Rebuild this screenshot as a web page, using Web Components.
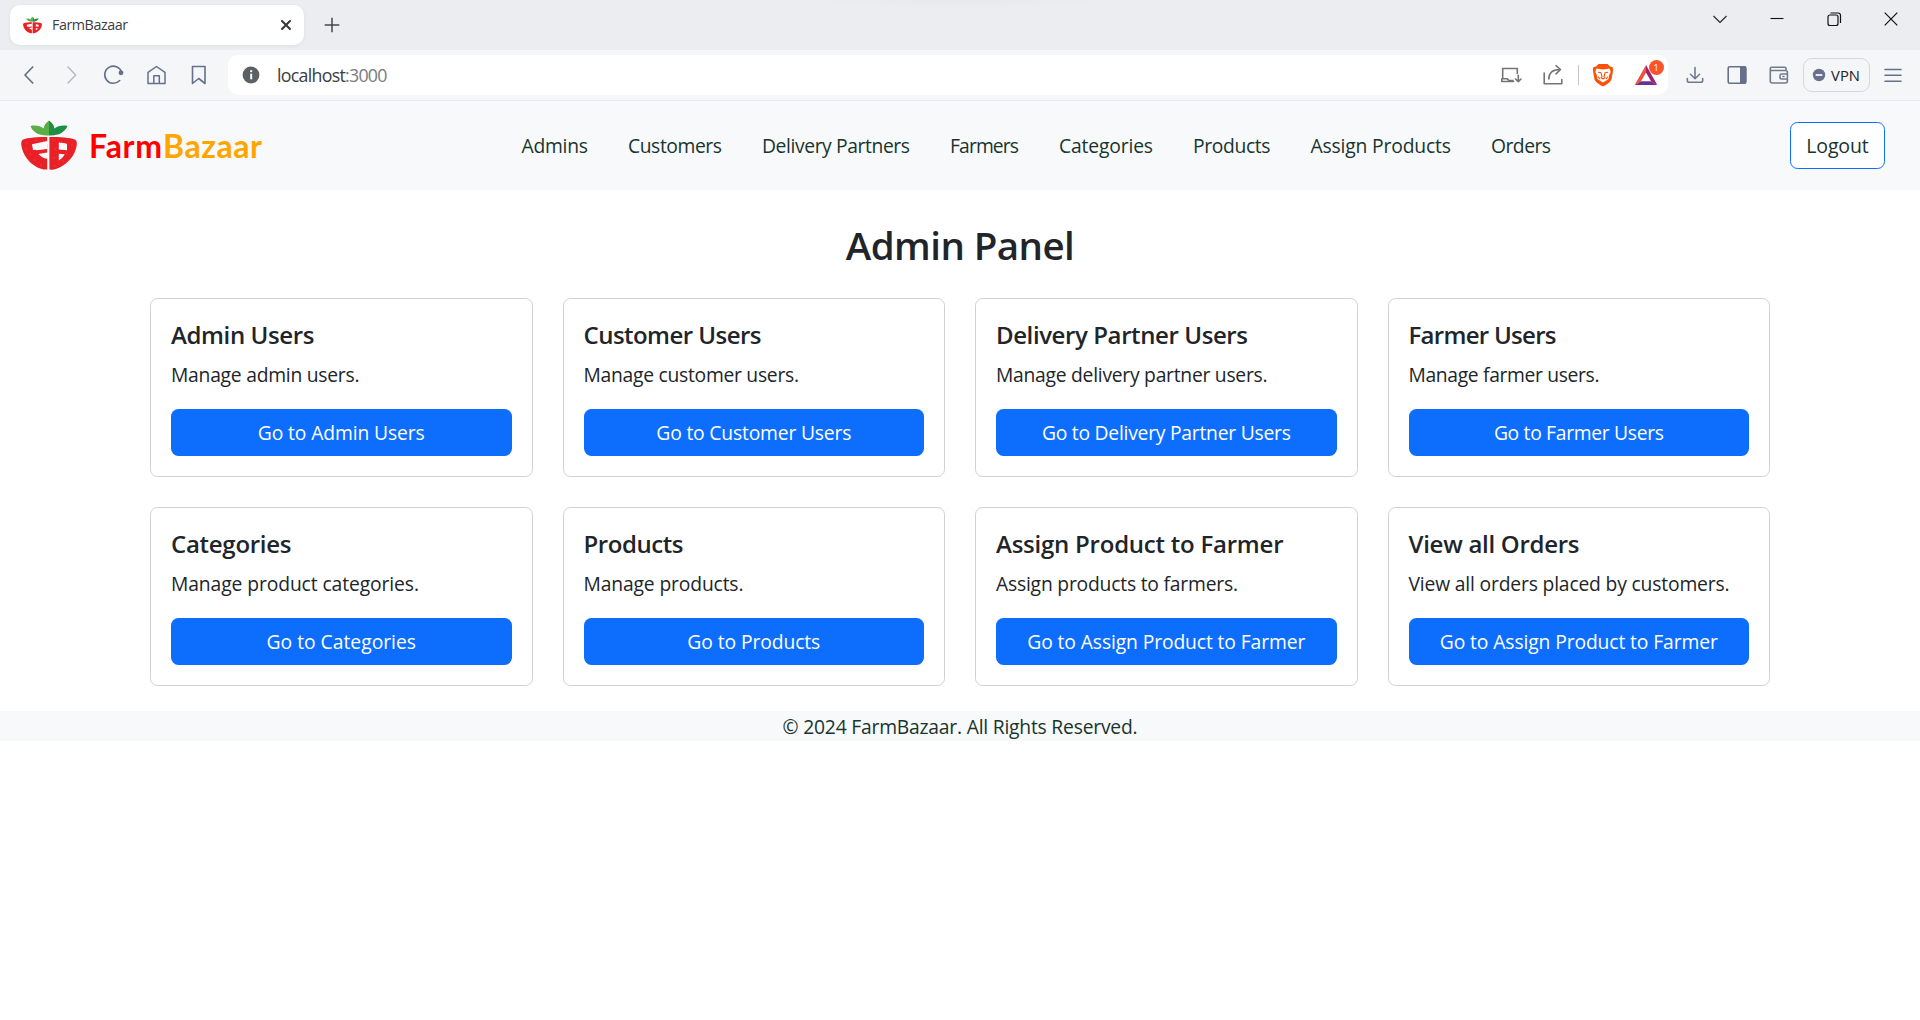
<!DOCTYPE html>
<html lang="en">
<head>
<meta charset="utf-8">
<title>FarmBazaar</title>
<style>
body{margin:0;background:#fff;color:#212529;font-family:"Open Sans","Noto Sans",sans-serif;font-size:19.300px}
</style>
</head>
<body>
<browser-chrome></browser-chrome>
<farm-navbar></farm-navbar>
<admin-panel>
  <panel-card heading="Admin Users" hw="143.500" text="Manage admin users." tw="188.500" action="Go to Admin Users" aw="167"></panel-card>
  <panel-card heading="Customer Users" hw="178" text="Manage customer users." tw="215.500" action="Go to Customer Users" aw="195"></panel-card>
  <panel-card heading="Delivery Partner Users" hw="252" text="Manage delivery partner users." tw="271.500" action="Go to Delivery Partner Users" aw="249"></panel-card>
  <panel-card heading="Farmer Users" hw="148" text="Manage farmer users." tw="191" action="Go to Farmer Users" aw="170"></panel-card>
  <panel-card heading="Categories" hw="120.500" text="Manage product categories." tw="248" action="Go to Categories" aw="149.500"></panel-card>
  <panel-card heading="Products" hw="100" text="Manage products." tw="160" action="Go to Products" aw="133"></panel-card>
  <panel-card heading="Assign Product to Farmer" hw="287.500" text="Assign products to farmers." tw="242" action="Go to Assign Product to Farmer" aw="278"></panel-card>
  <panel-card heading="View all Orders" hw="171" text="View all orders placed by customers." tw="321" action="Go to Assign Product to Farmer" aw="278"></panel-card>
</admin-panel>
<farm-footer></farm-footer>
<script>
const define = (name, markup, after) => customElements.define(name, class extends HTMLElement {
  connectedCallback() {
    if (this.shadowRoot) return;
    const t = document.createElement('template');
    t.innerHTML = typeof markup === 'function' ? markup(this) : markup;
    this.attachShadow({mode: 'open'}).append(t.content.cloneNode(true));
    if (after) after(this);
  }
});

/* A single line of text tracked so that it fills the width given in "w". */
define('fit-text', '<style>:host{display:inline-block;white-space:nowrap}span{display:inline-block}</style><span><slot></slot></span>', el => {
  const w = parseFloat(el.getAttribute('w'));
  const span = el.shadowRoot.querySelector('span');
  const n = el.textContent.length;
  const gap = (w - span.getBoundingClientRect().width) / (n - 1);
  el.style.width = w + 'px';
  span.style.letterSpacing = gap.toFixed(3) + 'px';
});

define('berry-logo', `<style>:host{display:block;flex:none}svg{display:block;width:100%;height:100%}</style>
<svg viewBox="0 0 56 50">
<path fill="#5aae45" d="M28 .5C24.500 3 23 5.500 22.800 8.500C19.500 6 14.500 5 9.500 6C11.500 11.500 17 16 28 15.500Z"/>
<path fill="#1f8f45" d="M28 .5C31.500 3 33.200 5.500 33.400 8.500C36.500 6 41.500 5 46.500 6C44 11.500 38.500 16 28 15.500Z"/>
<path fill="#ea2027" fill-rule="evenodd" d="M26.200 17C18 17 6 17.600 2 19.600C-.5 21 0 26 1.500 30C3.500 37 10.500 46 20 48.700C22.500 49.500 24.500 49.800 26.200 49.500V38.800C22.500 38 20 36.500 17.300 33.900L26.200 32.600V28.800L12 30L11 24.300L26.200 21Z"/>
<path fill="#ea2027" d="M15.500 26.200L26.200 24.400V27.300L15.500 28.400Z"/>
<path fill="#ea2027" fill-rule="evenodd" d="M28.400 17C38 17 50 17.600 54 19.600C56.700 21 56 26 54.500 30C52 38 44 46 35.500 48.700C32.500 49.600 30.300 49.800 28.400 49.500ZM37.800 22.500V29.500L46 30.300V24C43.500 23 41 22.600 37.800 22.500ZM37.800 33.800V40.500C41 38.500 42.500 37 43.700 34.300Z"/>
<path fill="#f8f9fb" d="M15 24.800L26.300 22.500V29L15 30.200Z"/>
<g fill="#f26a68"><circle cx="6" cy="23" r=".5"/><circle cx="5" cy="29" r=".5"/><circle cx="9" cy="34" r=".5"/><circle cx="14" cy="40" r=".5"/><circle cx="20" cy="45" r=".5"/><circle cx="15" cy="20" r=".5"/><circle cx="33" cy="20" r=".5"/><circle cx="34" cy="29" r=".5"/><circle cx="33" cy="38" r=".5"/><circle cx="46" cy="34" r=".5"/><circle cx="51" cy="25" r=".5"/><circle cx="34" cy="46" r=".5"/><circle cx="42" cy="41" r=".5"/></g>
<path fill="#ea2027" d="M13 26.800L26.200 24.600V27.400L13 28.800Z" opacity="0"/>
</svg>`);

const S = 'fill="none" stroke-linecap="round" stroke-linejoin="round"';
const icons = {
  back: `<path ${S} stroke="#66708a" stroke-width="1.700" d="M18.700 7L11 15L18.700 23"/>`,
  forward: `<path ${S} stroke="#b6bac5" stroke-width="1.500" d="M11 7L18.700 15L11 23"/>`,
  reload: `<path ${S} stroke="#66708a" stroke-width="1.600" d="M22.500 12A8.600 8.600 0 1 0 20.700 20.500"/><circle cx="22" cy="12.800" r="2.400" fill="#66708a"/>`,
  home: `<path ${S} stroke="#66708a" stroke-width="1.500" d="M6 12.300L14.500 6.500L23 12.300V23.500H6ZM11.800 23.200V15.800H17.300V23.200"/>`,
  bookmark: `<path ${S} stroke="#66708a" stroke-width="1.600" d="M8.500 6.500H21V23.500L14.700 18.500L8.500 23.500Z"/>`,
  info: `<circle cx="15" cy="15" r="8.400" fill="#5b6065"/><path stroke="#fff" stroke-width="2" d="M15.200 13.700V19.300"/><circle cx="15.200" cy="11.200" r="1.150" fill="#fff"/>`,
  device: `<path ${S} stroke="#737579" stroke-width="1.600" d="M6.700 18V8.500H21.300V13.500M5.800 18.700H11L13 20.500H17M5.800 18.700V21.500H17.500M22.300 15.200V21.500M19.500 19L22.300 21.700L25 19"/>`,
  share: `<path ${S} stroke="#737579" stroke-width="1.600" d="M6.200 13V23.700H23.800V19.500M10.800 19C10.800 13.500 14 9.700 21.500 9.500M18 5.700L22.500 9.500L18 13.800"/>`,
  lion: `<path fill="#fb5109" d="M10.500 4H19.700L22 6.500L24.800 7.200L25 11L23.500 19.500C22.500 22 18 25 15 26.500C12 25 7.500 22 6.500 19.500L5 11L5.200 7.200L8 6.500Z"/><path fill="#fff" d="M8.500 8.500L11.500 9L15 9.500L18.500 9L21.500 8.500L22.700 12L21 15.500L20.500 19L17.500 21L15 22.500L12.500 21L9.500 19L9 15.500L7.300 12Z"/><path ${S} stroke="#fb5109" stroke-width="1.100" d="M10.300 12.200L13 12.800L14 17M19.700 12.200L17 12.800L16 17M13 17.800L15 18.900L17 17.800M10.500 17L11.700 18.700M19.500 17L18.300 18.700"/>`,
  bat: `<path fill="#f7503a" d="M15 5L3.700 25L10 21.200L15 12.500Z"/><path fill="#9e2268" d="M15 5L26.300 25L20 21.200L15 12.500Z"/><path fill="#6b3296" d="M3.700 25H26.300L20 21.200H10Z"/>`,
  download: `<path ${S} stroke="#717b90" stroke-width="1.600" d="M15 7.500V18.500M10.500 14.300L15 18.700L19.500 14.300M7.300 18.500V20.500Q7.300 22.300 9.300 22.300H20.700Q22.700 22.300 22.700 20.500V18.500"/>`,
  sidebar: `<rect x="6.200" y="6.700" width="17.700" height="16.500" rx="1.500" fill="none" stroke="#66708a" stroke-width="1.600"/><path fill="#66708a" d="M18 6.500H24V23.300H18Z"/>`,
  wallet: `<path ${S} stroke="#717b90" stroke-width="1.600" d="M22 10.500V8.300Q22 7.200 20.800 7.200H7.700Q6.300 7.200 6.300 8.600V21Q6.300 23 8.300 23H21.500Q23.400 23 23.400 21V12.300Q23.400 10.500 21.500 10.500H7.500M23.300 14H17.700Q16 14 16 15.500V17.300Q16 19 17.700 19H23.300M19 16.500H20"/>`,
  menu: `<path stroke="#66708a" stroke-width="1.600" stroke-linecap="round" d="M7 9.500H23M7 15.300H23M7 21.200H23"/>`,
  plus: `<path stroke="#44474b" stroke-width="1.500" d="M7.700 15H22.300M15 7.700V22.300"/>`,
  tabclose: `<path stroke="#33363a" stroke-width="2" stroke-linecap="round" d="M11 11L19 19M19 11L11 19"/>`,
  chevron: `<path fill="none" stroke="#202124" stroke-width="1.100" d="M8.500 12L15 18.500L21.500 12"/>`,
  min: `<path stroke="#111" stroke-width="1.100" d="M8.500 14.500H21.500"/>`,
  restore: `<rect x="9" y="11" width="10" height="10.500" rx="2" fill="none" stroke="#111" stroke-width="1.200"/><path fill="none" stroke="#111" stroke-width="1.200" d="M11.500 9H19Q21.500 9 21.500 11.500V19"/>`,
  close: `<path stroke="#111" stroke-width="1.200" d="M8.700 8.700L21.300 21.300M21.300 8.700L8.700 21.300"/>`,
  vpn: `<circle cx="15" cy="15" r="6.200" fill="#6b7090"/><path stroke="#fff" stroke-width="1.700" d="M11.700 15H18.300"/>`
};
define('ui-icon', el => `<style>:host{display:grid;place-items:center;flex:none}svg{display:block;width:30px;height:30px}</style><svg viewBox="0 0 30 30">${icons[el.getAttribute('name')]}</svg>`);

define('browser-chrome', `<style>
:host{display:block;color:#3c4043}
.tabs{height:50px;background:radial-gradient(ellipse 150px 9px at 50% 0,#e7e8ec,#e7e8ec00) 810px 0/300px 9px no-repeat,#ecedf1;display:flex;padding-left:10px;box-sizing:border-box}
.tab{box-sizing:border-box;width:294px;height:40px;margin-top:5px;background:#fff;border-radius:10px;display:flex;align-items:center;padding-left:13px;box-shadow:0 1px 4px #0000000f}
.tab berry-logo{width:19px;height:18px}
.tab fit-text{font-size:14.300px;line-height:20px;margin-left:10px}
.tab ui-icon{margin-left:auto;margin-right:3px}
.plus{margin:10px 0 0 12.500px;height:30px}
.win{margin-left:auto;display:flex;height:37px}
.win ui-icon{width:57.100px}
.bar{height:51px;box-sizing:border-box;border-bottom:1px solid #e9ebee;background:#f5f6f8;display:flex;align-items:center;padding-left:8px}
.nav{width:42.500px}
.url{box-sizing:border-box;width:1440px;height:40px;background:#fff;border-radius:10px;margin-left:7.500px;display:flex;align-items:center;padding-left:7.500px}
.url fit-text{font-size:17.800px;margin:-1px 0 0 11.500px;line-height:24px;color:#3a3d41}
.right{margin-left:auto;display:flex;align-items:center}
.right .cell{width:42px}
.line{width:1px;height:20px;background:#c4c6ca;margin:0 9px 0 4px}
.bat{position:relative;margin:0 7px 0 13px}
.badge{position:absolute;left:17.500px;top:0;width:15px;height:15px;border-radius:50%;background:#fb542b;color:#fff;font-size:9px;line-height:15px;text-align:center}
.vpn{box-sizing:border-box;width:67px;height:34px;border:1px solid #d5d8dd;border-radius:9px;display:flex;align-items:center;margin-left:3px}
.vpn ui-icon{width:30px}
.vpn fit-text{font-size:14.800px;color:#202124;margin-left:-3px;line-height:20px}
.icons{margin-left:6px;display:flex;align-items:center}
.icons .t{width:42px}
.menu{margin-left:7.500px}
</style>
<div class="tabs"><div class="tab"><berry-logo></berry-logo><fit-text w="76">FarmBazaar</fit-text><ui-icon name="tabclose"></ui-icon></div><ui-icon class="plus" name="plus"></ui-icon>
<div class="win"><ui-icon name="chevron"></ui-icon><ui-icon name="min"></ui-icon><ui-icon name="restore"></ui-icon><ui-icon name="close"></ui-icon></div></div>
<div class="bar"><ui-icon class="nav" name="back"></ui-icon><ui-icon class="nav" name="forward"></ui-icon><ui-icon class="nav" name="reload"></ui-icon><ui-icon class="nav" name="home"></ui-icon><ui-icon class="nav" name="bookmark"></ui-icon>
<div class="url"><ui-icon name="info"></ui-icon><fit-text w="110.500">localhost<span style="color:#777b80">:3000</span></fit-text>
<div class="right"><ui-icon class="cell" name="device"></ui-icon><ui-icon class="cell" name="share"></ui-icon><div class="line"></div><ui-icon name="lion"></ui-icon><div class="bat"><ui-icon name="bat"></ui-icon><div class="badge">1</div></div></div></div>
<div class="icons"><ui-icon class="t" name="download"></ui-icon><ui-icon class="t" name="sidebar"></ui-icon><ui-icon class="t" name="wallet"></ui-icon></div>
<div class="vpn"><ui-icon name="vpn"></ui-icon><fit-text w="29">VPN</fit-text></div><ui-icon class="menu" name="menu"></ui-icon></div>`);

define('farm-navbar', `<style>
:host{display:flex;align-items:center;box-sizing:border-box;height:89px;background:#f8f9fb;padding:0 35px 0 21px;color:#17352d;line-height:30px}
berry-logo{width:56px;height:50px;margin-top:-1px}
.brand{font:700 32px/40px Lato,sans-serif;margin:0 0 0 12px;display:flex;width:173px;justify-content:space-between}
.farm{color:red}.bazaar{color:orange}
nav{display:flex;gap:40px;margin-left:259.500px}
.logout{box-sizing:border-box;margin-left:auto;width:95px;height:47px;border:1px solid #0d6efd;border-radius:7.500px;background:#fff;display:grid;place-items:center;font-size:19.500px}
</style>
<berry-logo></berry-logo><div class="brand"><fit-text class="farm" w="73">Farm</fit-text><fit-text class="bazaar" w="99">Bazaar</fit-text></div>
<nav><fit-text w="66.500">Admins</fit-text><fit-text w="94">Customers</fit-text><fit-text w="148">Delivery Partners</fit-text><fit-text w="69">Farmers</fit-text><fit-text w="94">Categories</fit-text><fit-text w="77.500">Products</fit-text><fit-text w="140.500">Assign Products</fit-text><fit-text w="60">Orders</fit-text></nav>
<div class="logout"><fit-text w="62.500">Logout</fit-text></div>`);

define('admin-panel', `<style>
:host{display:block;width:1620px;margin:0 auto;padding-top:30px}
h1{font-size:38.500px;font-weight:600;line-height:60px;margin:-5px 0 0;text-align:center}
.grid{display:grid;grid-template-columns:repeat(4,1fr);gap:30px;padding-top:23px}
</style><h1><fit-text w="229">Admin Panel</fit-text></h1><div class="grid"><slot></slot></div>`);

define('panel-card', el => { const a = n => el.getAttribute(n); return `<style>
:host{display:block;box-sizing:border-box;height:179px;border:1px solid #d0d1d2;border-radius:7.500px;padding:21px 20px 20px}
h5{font-size:24px;font-weight:600;line-height:30px;margin:0 0 10px}
p{margin:0 0 19px;line-height:30px;height:30px}
.btn{height:47px;line-height:48px;border-radius:7.500px;background:#0d6efd;color:#fff;text-align:center}
fit-text{vertical-align:top}
</style><h5><fit-text w="${a('hw')}">${a('heading')}</fit-text></h5><p><fit-text w="${a('tw')}">${a('text')}</fit-text></p><div class="btn"><fit-text w="${a('aw')}">${a('action')}</fit-text></div>`; });

define('farm-footer', `<style>:host{display:block;height:30px;line-height:32px;margin-top:25px;background:#f8f9fb;color:#17352d;text-align:center}fit-text{vertical-align:top}</style><fit-text w="355">© 2024 FarmBazaar. All Rights Reserved.</fit-text>`);
</script>
</body>
</html>
